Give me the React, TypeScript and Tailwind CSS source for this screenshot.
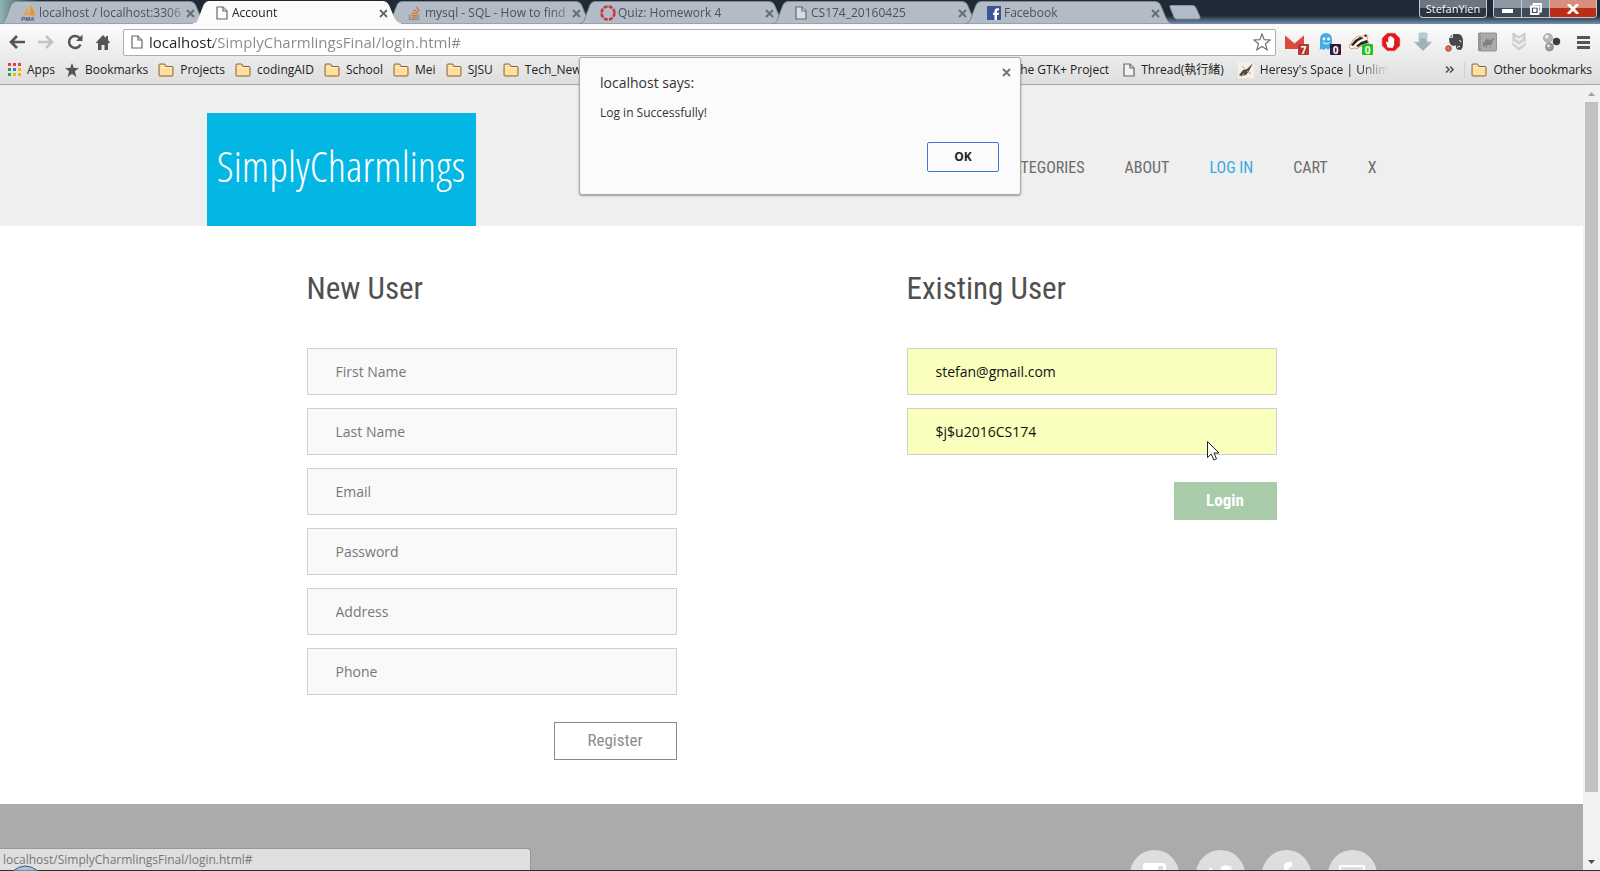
import type { ReactNode } from "react";

const ui = "font-['Open_Sans','Noto_Sans_CJK_TC',sans-serif]";
const narrow = "font-['Roboto_Condensed','Open_Sans_Condensed',sans-serif]";
const script = "font-['Open_Sans_Condensed_Light','Roboto_Condensed',sans-serif]";

function PageIcon({ className = "" }: { className?: string }) {
  return (
    <svg viewBox="0 0 12 14" className={`h-[14px] w-[12px] shrink-0 ${className}`} fill="#fff" fillOpacity="0.5" stroke="#666" strokeWidth="1.2">
      <path d="M1 1h6l4 4v8H1z" />
      <path d="M7 1v4h4" />
    </svg>
  );
}

function FolderIcon() {
  return (
    <svg viewBox="0 0 16 14" className="h-[14px] w-4 shrink-0">
      <path d="M1 3.500V2q0-1 1-1h4q1 0 1.500 1l.5 1.500h6q1 0 1 1V12q0 1-1 1H2q-1 0-1-1z" fill="#fbd48a" stroke="#8a6238" />
      <path d="M2 5h12v7H2z" fill="#ffdf9f" />
      <path d="M2 4.500h12" stroke="#fff0c8" />
      <path d="M2.500 2.500h3.500" stroke="#fff0c8" />
    </svg>
  );
}

function CloseMark({ className = "" }: { className?: string }) {
  return (
    <svg viewBox="0 0 9 9" className={`h-[9px] w-[9px] ${className}`} stroke="currentColor" strokeWidth="1.8">
      <path d="M1 1l7 7M8 1L1 8" />
    </svg>
  );
}

const pmaIcon = (
  <svg viewBox="0 0 16 16" className="h-4 w-4">
    <path d="M5.500 1.500C6 5 4 8 1 10.500l6-.8C7.500 6 7 3 5.500 1.500z" fill="#e8a04a" />
    <path d="M9 .5c.5 4 0 7-1.500 9.500l6.500.5C13.500 6 12 3 9 .5z" fill="#f0932b" />
    <text x="0" y="15.500" fontSize="6" fontWeight="700" fontStyle="italic" fill="#4a4f86" fontFamily="Liberation Sans">PMA</text>
  </svg>
);
const stackIcon = (
  <svg viewBox="0 0 16 16" className="h-4 w-4" fill="none">
    <path d="M2.500 9.500v5h9v-5" stroke="#8c8f93" strokeWidth="1.400" />
    <path d="M4.500 12.500h5.500M4.500 10.300l5.500.6M5 7.700l5.300 1.500M6.500 4.700l4.700 2.900M9.300 1.800l3.200 4.400" stroke="#d8772f" strokeWidth="1.400" />
  </svg>
);
const quizIcon = (
  <svg viewBox="0 0 16 16" className="h-4 w-4" fill="none">
    <circle cx="8" cy="8" r="6.500" stroke="#c9373b" strokeWidth="2.600" strokeDasharray="3.900 1.200" />
  </svg>
);
const facebookIcon = (
  <svg viewBox="0 0 14 14" className="h-[14px] w-[14px]">
    <path d="M0 0h14v14H0z" fill="#3d5593" />
    <path d="M7.500 14V9H6V6.700h1.500V5.200C7.500 3.300 8.500 2.300 10.300 2.300h1.700v2.200h-1c-.8 0-1 .4-1 1v1.200h2L11.700 9H10v5z" fill="#fff" />
  </svg>
);

type Tab = { title: string; icon: ReactNode; active?: boolean };
const tabs: Tab[] = [
  { title: "localhost / localhost:3306", icon: pmaIcon },
  { title: "Account", icon: <PageIcon />, active: true },
  { title: "mysql - SQL - How to find", icon: stackIcon },
  { title: "Quiz: Homework 4", icon: quizIcon },
  { title: "CS174_20160425", icon: <PageIcon /> },
  { title: "Facebook", icon: facebookIcon },
];

function BrowserTab({ title, icon, active }: Tab) {
  return (
    <div className={`relative flex h-6 w-[193px] min-w-0 items-center pt-[2px] pr-[6px] pl-3 ${active ? "z-10" : ""}`}>
      <svg viewBox="0 0 209 24" preserveAspectRatio="none" className="absolute inset-y-0 -left-2 h-6 w-[calc(100%+16px)]">
        <path
          d="M0 24C4 23 5 21 6 18L11 5Q12.500 1.500 16 1.500H190Q194 1.500 195.500 5L201 18Q203 23 208 24z"
          fill={active ? "#fbfbfb" : "#b2bbc6"}
          stroke={active ? "#fbfbfb" : "#7e8995"}
        />
      </svg>
      <span className="relative flex w-[17px] shrink-0 justify-center">{icon}</span>
      <span
        className={`relative ml-[2px] min-w-0 flex-1 text-[12px] leading-4 whitespace-nowrap ${active ? "text-[#222]" : "text-[#4b525a]"} mask-[linear-gradient(90deg,#000_85%,#0004)]`}
      >
        {title}
      </span>
      <button aria-label={`Close ${title}`} className="relative text-[#666b70]">
        <CloseMark />
      </button>
    </div>
  );
}

function Extensions() {
  const box = "relative h-5 w-5";
  return (
    <div className="flex items-center gap-3">
      <button aria-label="Mail" className={box}>
        <svg viewBox="0 0 24 24" className="h-6 w-6">
          <path d="M0 3h19v14H0z" fill="#d9493c" />
          <path d="M0 3l9.500 8L19 3" fill="#f4f4f4" stroke="#e6e0df" />
          <rect x="13" y="12" width="11" height="11" rx="1" fill="#b3392f" />
          <text x="18.500" y="21.500" textAnchor="middle" fontSize="10" fontWeight="700" fill="#fff" fontFamily="Open Sans">7</text>
        </svg>
      </button>
      <button aria-label="Ghost" className={box}>
        <svg viewBox="0 0 24 24" className="h-6 w-6">
          <path d="M3 17V8q0-7 6-7t6 7v9l-2-1-2 2-2-2-2 2-2-1-4 1z" fill="#45aee0" />
          <circle cx="7" cy="7" r="1.400" fill="#fff" />
          <circle cx="11.500" cy="7" r="1.400" fill="#fff" />
          <path d="M6 10.500q3.200 3 6.500 0" fill="none" stroke="#fff" />
          <rect x="13" y="12" width="11" height="11" rx="1" fill="#33183d" />
          <text x="18.500" y="21.500" textAnchor="middle" fontSize="10" fontWeight="700" fill="#fff" fontFamily="Open Sans">0</text>
        </svg>
      </button>
      <button aria-label="Badger" className={box}>
        <svg viewBox="0 0 24 24" className="h-6 w-6">
          <path d="M0 15l4-7 5-4 4 .5 4-2 2 2-1 3 2 4-5 1-7 4-3-.5-3 1z" fill="#fbf6f0" stroke="#cf8544" strokeWidth=".8" />
          <path d="M2 13l4-5 5-3 4 1-6 3-5 5zM7 14l5-4 6-2 1 3-5 1-5 3z" fill="#282522" />
          <path d="M15 3.500l2-1 1 1-1 2z" fill="#282522" />
          <rect x="13" y="12" width="11" height="11" rx="1" fill="#1fc51b" />
          <text x="18.500" y="21.500" textAnchor="middle" fontSize="10" fontWeight="700" fill="#fff" fontFamily="Open Sans">0</text>
        </svg>
      </button>
      <button aria-label="Ad blocker" className={box}>
        <svg viewBox="0 0 20 20" className="h-5 w-5">
          <path d="M6.300 1h7.400L19 6.300v7.400L13.700 19H6.300L1 13.700V6.300z" fill="#dd1b1f" stroke="#f2a6a6" strokeWidth=".6" />
          <path d="M6.500 15.500L5 10.500q0-1 1-1l1.200 1.300V5.500q.7-1.200 1.400 0V4.300q.8-1.300 1.600 0v.7q.8-1 1.500 0v1.400q.8-.8 1.500 0v6l-1.500 3.600z" fill="#fff" />
        </svg>
      </button>
      <button aria-label="Downloads" className={box}>
        <svg viewBox="0 0 20 20" className="h-5 w-5">
          <path d="M6 1h8v9h5l-9 9-9-9h5z" fill="#9db2ba" stroke="#c7d2d6" />
          <path d="M7 1.500h6v5H7z" fill="#bccbd1" />
        </svg>
      </button>
      <button aria-label="Web clipper" className={box}>
        <svg viewBox="0 0 20 20" className="h-5 w-5">
          <path d="M4 6l4-4h5q5 0 5 8t-3 8q-4 0-4-3t-2-1q-5 0-5-8z" fill="#44484a" />
          <path d="M4 5.500h3.500V2M14 8.500q2 0 2 2M12.500 16q0-2 2.500-1.500" fill="none" stroke="#d5d5d5" strokeWidth="1.100" />
          <circle cx="3.500" cy="16.500" r="2.800" fill="#e26a5a" stroke="#a5443b" />
        </svg>
      </button>
      <button aria-label="Camel" className={box}>
        <svg viewBox="0 0 20 20" className="h-5 w-5">
          <rect x="1.500" y="1" width="18" height="18" rx="1" fill="#aaa" stroke="#929292" />
          <path d="M3 1v18" stroke="#888" strokeDasharray="1.500 1.500" strokeWidth="2" />
          <path d="M6 15v-4l2-2 1.500-3 1.500 2 1.500-1L14 9l1.500-3L18 7l-2 1-1 4-1.500 1v3H13v-3h-3v3H9v-3l-2 2z" fill="#808080" />
        </svg>
      </button>
      <button aria-label="Site advisor" className={box}>
        <svg viewBox="0 0 20 20" className="h-5 w-5">
          <path d="M4 1l6 4 6-4v12l-6 5-6-5z" fill="#d3d3d3" stroke="#c4c4c4" />
          <path d="M6.500 5.500L10 8l3.500-2.500M4 10l6 4 6-4" fill="none" stroke="#f3f3f3" strokeWidth="1.600" />
        </svg>
      </button>
      <button aria-label="Share" className={box}>
        <svg viewBox="0 0 20 20" className="h-5 w-5">
          <circle cx="7" cy="6" r="4.500" fill="#b8b8b8" stroke="#8a8a8a" strokeWidth=".6" />
          <circle cx="15.500" cy="9.500" r="3.700" fill="#3c3c3c" />
          <circle cx="8.500" cy="15" r="4" fill="#9a9a9a" stroke="#777" strokeWidth=".6" />
          <circle cx="5.800" cy="4.600" r="1.800" fill="#efefef" />
          <circle cx="7.500" cy="13.800" r="1.500" fill="#e2e2e2" />
        </svg>
      </button>
      <button aria-label="Menu" className="flex h-5 w-5 flex-col items-center justify-center gap-[2px]">
        <span className="h-[3px] w-[13px] bg-[#555]" />
        <span className="h-[3px] w-[13px] bg-[#555]" />
        <span className="h-[3px] w-[13px] bg-[#555]" />
      </button>
    </div>
  );
}

const appColors = ["#e8413a", "#e8413a", "#e8413a", "#2f9e5b", "#3b78e7", "#f5b400", "#2f9e5b", "#f5b400", "#f5b400"];
const appsIcon = (
  <svg viewBox="0 0 13 13" className="h-[13px] w-[13px]">
    {appColors.map((c, i) => (
      <rect key={i} x={(i % 3) * 5} y={Math.floor(i / 3) * 5} width="3" height="3" fill={c} />
    ))}
  </svg>
);
const starIcon = (
  <svg viewBox="0 0 14 14" className="h-[14px] w-[14px]" fill="#555">
    <path d="M7 0l1.800 4.900 5.200.2-4.100 3.200L11.400 14 7 10.700 2.600 14l1.500-5.700L0 5.100l5.200-.2z" />
  </svg>
);
const spaceIcon = (
  <svg viewBox="0 0 16 16" className="h-4 w-4">
    <path d="M0 0h16v16H0z" fill="#f4f1ec" />
    <path d="M1 13l4-5 4-1 6-6-4 8-3 4-5 1z" fill="#55463a" />
    <path d="M4 4l4 4M3 15l3-4M13 12l-4-3" stroke="#c9a27c" />
  </svg>
);

function Bookmark({ icon, label, fade }: { icon: ReactNode; label: string; fade?: boolean }) {
  return (
    <a href="#" className={`flex shrink-0 items-center gap-[6px] whitespace-nowrap ${fade ? "mask-[linear-gradient(90deg,#000_80%,transparent)]" : ""}`}>
      {icon}
      <span>{label}</span>
    </a>
  );
}

function Chrome() {
  return (
    <header className={`${ui} shrink-0`}>
      <div className="flex h-[25px] items-start justify-between border-b border-[#f6f6f6] bg-[linear-gradient(180deg,#1f2a36_0%,#1f2a36_65%,#7590b0_100%)]">
        <div className="flex items-end bg-[linear-gradient(90deg,#8fb5b5_0,#1f2a36_40px,transparent_1100px)] pl-2">
          {tabs.map((t) => (
            <BrowserTab key={t.title} {...t} />
          ))}
          <button aria-label="New tab" className="mb-1 h-[15px]">
            <svg viewBox="0 0 32 15" className="ml-[3px] h-[15px] w-8">
              <path d="M2 .5H24Q26 .5 27 3l4 9q.5 2-1 2H8q-2 0-3-2L1 2Q.5.5 2 .5z" fill="#b3bcc6" stroke="#8993a0" />
            </svg>
          </button>
        </div>
        <div className="flex items-start gap-[6px] pr-[3px] text-white">
          <button className="h-[18px] w-[68px] rounded-b border border-t-0 border-[#c3cad2] bg-[linear-gradient(180deg,#6c7580_50%,#2d3640_50%)] text-[11px] leading-4 text-shadow-sm">
            StefanYien
          </button>
          <div className="flex h-[18px] overflow-hidden rounded-b border border-t-0 border-[#c3cad2]">
            <button aria-label="Minimize" className="flex w-7 items-center justify-center border-r border-[#c3cad2] bg-[linear-gradient(180deg,#8d97a3_45%,#3e4a57_45%)]">
              <span className="mt-1 h-1 w-[11px] bg-white" />
            </button>
            <button aria-label="Restore" className="flex w-7 items-center justify-center border-r border-[#c3cad2] bg-[linear-gradient(180deg,#8d97a3_45%,#3e4a57_45%)]">
              <svg viewBox="0 0 12 12" className="h-3 w-3" fill="none" stroke="#fff" strokeWidth="1.800">
                <path d="M3.500 3V1H11v7.500H9" />
                <path d="M1 3.500h7.500V11H1zM4 6.500h1.500v1.500H4z" />
              </svg>
            </button>
            <button aria-label="Close window" className="flex w-[46px] items-center justify-center bg-[linear-gradient(180deg,#d98d7f_45%,#bb2d17_45%)]">
              <svg viewBox="0 0 12 10" className="h-[10px] w-3" stroke="#fff" strokeWidth="2.800">
                <path d="M1 0l10 10M11 0L1 10" />
              </svg>
            </button>
          </div>
        </div>
      </div>

      <div className="border-b border-[#a5a5a5] bg-[linear-gradient(180deg,#fbfbfb,#dedede)]">
        <div className="flex h-[34px] items-center pr-[7px] pl-[9px]">
          <div className="flex items-center gap-[13px] pr-[13px] text-[#555]">
            <button aria-label="Back">
              <svg viewBox="0 0 16 14" className="h-[14px] w-4" fill="none" stroke="currentColor" strokeWidth="2.600">
                <path d="M16 7H2.500M8 1L2 7l6 6" />
              </svg>
            </button>
            <button aria-label="Forward" className="text-[#c2c2c2]">
              <svg viewBox="0 0 16 14" className="h-[14px] w-4" fill="none" stroke="currentColor" strokeWidth="2.600">
                <path d="M0 7h13.500M8 1l6 6-6 6" />
              </svg>
            </button>
            <button aria-label="Reload">
              <svg viewBox="0 0 16 16" className="h-4 w-4" fill="none" stroke="currentColor" strokeWidth="2.500">
                <path d="M13 4.500A6 6 0 1 0 13.500 10.500" />
                <path d="M15.500.5v6.500H9z" fill="currentColor" stroke="none" />
              </svg>
            </button>
            <button aria-label="Home">
              <svg viewBox="0 0 14 15" className="h-[15px] w-[14px]" fill="currentColor">
                <path d="M7 0l3 3V1h2v4l2 2.500-1 1-1-.8V15H8.500v-5h-3v5H2V7.700l-1 .8-1-1z" />
              </svg>
            </button>
          </div>
          <label className="flex h-[27px] min-w-0 flex-1 items-center rounded-[2px] border border-[#adadad] bg-white pr-1 pl-[7px]">
            <PageIcon />
            <input
              aria-label="Address"
              defaultValue="localhost/SimplyCharmlingsFinal/login.html#"
              className="ml-[6px] min-w-0 flex-1 bg-[linear-gradient(90deg,#222_65px,#888_65px)] bg-clip-text text-[15px] leading-6 text-transparent outline-none"
            />
            <svg viewBox="0 0 18 18" className="h-[18px] w-[18px]" fill="#fff" stroke="#707070" strokeWidth="1.200">
              <path d="M9 1l2.200 5.700 6 .3-4.700 3.800 1.600 6L9 13.500l-5.100 3.300 1.600-6L.8 7l6-.3z" />
            </svg>
          </label>
          <div className="pl-[9px]">
            <Extensions />
          </div>
        </div>
        <nav className="flex h-[25px] items-center pr-2 pb-1 pl-2 text-[12px] leading-4 text-[#222]">
          <div className="flex flex-1 items-center gap-[10px]">
            <Bookmark icon={appsIcon} label="Apps" />
            <Bookmark icon={starIcon} label="Bookmarks" />
            {["Projects", "codingAID", "School", "Mei", "SJSU", "Tech_News"].map((l) => (
              <Bookmark key={l} icon={<FolderIcon />} label={l} />
            ))}
          </div>
          <div className="flex items-center gap-[14px] pr-14">
            <Bookmark icon={<PageIcon />} label="The GTK+ Project" />
            <Bookmark icon={<PageIcon />} label="Thread(執行緒)" />
            <Bookmark icon={spaceIcon} label="Heresy's Space | Unlim" fade />
          </div>
          <button aria-label="More bookmarks" className="mr-[10px]">
            <svg viewBox="0 0 9 7" className="h-[7px] w-[9px]" fill="none" stroke="#555" strokeWidth="1.600">
              <path d="M1 .5l3 3-3 3M5 .5l3 3-3 3" />
            </svg>
          </button>
          <div className="border-l border-[#c8d0d8] pl-[6px]">
            <Bookmark icon={<FolderIcon />} label="Other bookmarks" />
          </div>
        </nav>
      </div>
    </header>
  );
}

function SiteHeader() {
  return (
    <div className="bg-[#efefef] pt-7">
      <div className="mx-auto flex max-w-[1170px] items-center justify-between">
        <a href="#" className={`${script} flex h-[113px] w-[269px] items-center justify-center bg-[#03b7e5] pb-2 text-[43px] leading-none font-light text-white`}>
          SimplyCharmlings
        </a>
        <nav className={`${narrow} flex gap-10 pb-1 text-[16px] leading-6 text-[#6b6b6b]`}>
          <a href="#">CATEGORIES</a>
          <a href="#">ABOUT</a>
          <a href="#" className="text-[#35abe2]">LOG IN</a>
          <a href="#">CART</a>
          <a href="#">X</a>
        </nav>
      </div>
    </div>
  );
}

const field = "block h-[47px] w-full border border-[#cfcfcf] px-7 text-[14px] outline-none placeholder:text-[#777]";

function Forms() {
  return (
    <main className="mx-auto grid w-full max-w-[1200px] grid-cols-2 pt-[43px] pb-11">
      <form className="px-[115px]">
        <h2 className={`${narrow} mb-[39px] text-[31px] leading-10 text-[#505050]`}>New User</h2>
        <div className="flex flex-col gap-[13px]">
          {["First Name", "Last Name", "Email", "Password", "Address", "Phone"].map((l) => (
            <input key={l} aria-label={l} placeholder={l} className={`${field} bg-[#f9f9f9]`} />
          ))}
        </div>
        <div className="mt-[27px] flex justify-end">
          <button type="button" className={`${narrow} h-[38px] w-[123px] border border-[#8a8a8a] bg-white text-[17px] text-[#8c8c8c]`}>
            Register
          </button>
        </div>
      </form>
      <form className="px-[115px]">
        <h2 className={`${narrow} mb-[39px] text-[31px] leading-10 text-[#505050]`}>Existing User</h2>
        <div className="flex flex-col gap-[13px]">
          <input aria-label="Email" defaultValue="stefan@gmail.com" className={`${field} bg-[#faffbd] text-[#111]`} />
          <input aria-label="Password" defaultValue="$j$u2016CS174" className={`${field} bg-[#faffbd] text-[#111]`} />
        </div>
        <div className="mt-[27px] flex justify-end">
          <button type="button" className={`${narrow} h-[38px] w-[103px] bg-[#a9cba9] text-[17px] font-bold text-white`}>
            Login
          </button>
        </div>
      </form>
    </main>
  );
}

const social: { name: string; art: ReactNode }[] = [
  {
    name: "Instagram",
    art: (
      <>
        <rect x="13" y="13" width="23" height="23" rx="3" fill="#fff" />
        <rect x="28" y="16" width="5" height="5" fill="#dedede" />
        <circle cx="24.500" cy="25" r="5" fill="#dedede" />
      </>
    ),
  },
  {
    name: "Twitter",
    art: (
      <path
        d="M14 17q4 5 10.500 5-1-4.500 3-6.500 3-1 5.500 1l3-1-2 3 2.500-.5-2.500 2.500q0 7-5 11.500-7.500 5-15.500.5 4 0 6.500-2-4 0-5-3.500h2q-4-1.500-4-5.500l2 .6q-3-2.500-1-5.100z"
        fill="#fff"
      />
    ),
  },
  { name: "Facebook page", art: <path d="M22 37V26h-4v-5h4v-4q0-5 5-5h3v5h-2q-1.500 0-1.500 1.500V21H30l-.5 5h-3v11z" fill="#fff" /> },
  {
    name: "Email us",
    art: <path d="M12 16h24v17H12z" fill="none" stroke="#fff" strokeWidth="2" strokeLinejoin="round" />,
  },
];

function Footer() {
  return (
    <footer className="flex-1 bg-[#ababab] pt-[46px]">
      <div className="mx-auto flex max-w-[1170px] justify-end gap-[17px]">
        {social.map((s) => (
          <a key={s.name} href="#" aria-label={s.name} className="h-[49px] w-[49px] rounded-full bg-[#dedede]">
            <svg viewBox="0 0 49 49" className="h-[49px] w-[49px]">
              {s.art}
            </svg>
          </a>
        ))}
      </div>
    </footer>
  );
}

function Scrollbar() {
  return (
    <div className="flex w-[17px] shrink-0 flex-col items-center bg-[#f1f1f1]">
      <svg viewBox="0 0 17 17" className="h-[17px] w-[17px]" fill="#a3a3a3">
        <path d="M5 11l3.500-4L12 11z" />
      </svg>
      <div className="w-[13px] flex-1 bg-[#c1c1c1]" />
      <div className="h-[61px]" />
      <svg viewBox="0 0 17 17" className="h-[17px] w-[17px]" fill="#505050">
        <path d="M5 7l3.500 4L12 7z" />
      </svg>
    </div>
  );
}

export default function App() {
  return (
    <div className={`${ui} relative flex h-screen flex-col overflow-hidden bg-white`}>
      <Chrome />
      <div className="flex min-h-0 flex-1">
        <div className="flex min-w-0 flex-1 flex-col overflow-hidden">
          <SiteHeader />
          <Forms />
          <Footer />
        </div>
        <Scrollbar />
      </div>
      <div className="h-px shrink-0 bg-[#22303c]" />

      <div className="absolute bottom-px left-0 h-[22px] w-[531px] rounded-tr border-t border-r border-[#989898] bg-[#dfdfdf] pl-[3px] text-[12px] leading-[22px] text-[#777]">
        localhost/SimplyCharmlingsFinal/login.html#
      </div>
      <svg viewBox="0 0 28 6" className="absolute bottom-0 left-3 h-[6px] w-7">
        <path d="M1 6Q13 -4 26 6z" fill="#a9c4dc" stroke="#2c5c86" />
      </svg>

      <div role="alertdialog" aria-label="localhost says:" className="absolute top-[57px] left-1/2 z-20 w-[442px] -translate-x-1/2 rounded-[3px] border border-[#a8a8a8] bg-[#fbfbfb] pt-[13px] pr-[21px] pb-[22px] pl-5 text-[#333] shadow-[0_1px_2px_rgba(0,0,0,0.35)]">
        <button aria-label="Dismiss" className="absolute top-[10px] right-[9px] text-[#737373]">
          <CloseMark />
        </button>
        <h1 className="text-[14px] leading-6">localhost says:</h1>
        <p className="mt-[10px] text-[12px] leading-4">Log in Successfully!</p>
        <div className="mt-[21px] flex justify-end">
          <button className="h-[30px] w-[72px] rounded-[2px] border border-[#3f78dc] bg-[#fbfbfb] text-[12px] font-bold text-[#222]">OK</button>
        </div>
      </div>

      <svg viewBox="0 0 13 20" className="absolute top-[441px] left-[1207px] h-5 w-[13px]">
        <path d="M.5.500v16l3.700-3.500 2.700 6 2.600-1.200L7 12h5z" fill="#fff" stroke="#222" />
      </svg>
    </div>
  );
}
